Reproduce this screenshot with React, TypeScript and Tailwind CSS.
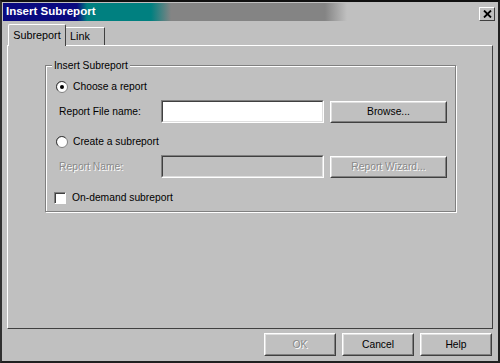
import React from 'react';

const font = "font-['Liberation_Sans',Arial,sans-serif]";

function Bevel({ children, className = "", disabled = false }: { children: React.ReactNode; className?: string; disabled?: boolean }) {
    return (
        <div className={`shrink-0 border border-t-white border-l-white border-r-[#404040] border-b-[#404040] ${className}`}>
            <div className="w-full h-full border border-t-[#dfdfdf] border-l-[#dfdfdf] border-r-[#808080] border-b-[#808080] flex items-center justify-center">
                <span className={disabled ? "text-[#8a8a8a] [text-shadow:1px_1px_0_#fff]" : "text-black"}>{children}</span>
            </div>
        </div>
    );
}

function Field({ disabled = false }: { disabled?: boolean }) {
    return (
        <div className="shrink-0 w-[163px] h-[23px] border border-t-[#808080] border-l-[#808080] border-r-white border-b-white">
            <div className={`w-full h-full border border-t-[#404040] border-l-[#404040] border-r-[#dfdfdf] border-b-[#dfdfdf] ${disabled ? "bg-[#c0c0c0]" : "bg-white"}`} />
        </div>
    );
}

function Radio({ checked }: { checked: boolean }) {
    return (
        <svg width="12" height="12" viewBox="0 0 12 12">
            <circle cx="6" cy="6" r="5.5" fill="#fff" stroke="#808080" />
            <path d="M2 9.5 A5 5 0 0 1 9.5 2" fill="none" stroke="#404040" />
            {checked && <circle cx="6" cy="6" r="2" fill="#000" />}
        </svg>
    );
}

export default function App() {
    return (
        <div className={`w-[500px] h-[363px] bg-[#c0c0c0] border-2 border-t-[#101010] border-l-[#303030] border-r-[#202020] border-b-[#202020] text-[10.3px] ${font} flex flex-col`}>
            <div className="h-[18px] mx-[1px] mt-[1px] flex items-center justify-between bg-[linear-gradient(to_right,#0a0a80_0,#0a0a80_74px,#008080_84px,#008080_148px,#848484_168px,#848484_322px,#c0c0c0_344px)]">
                <span className="text-white font-bold text-[11.5px] pl-[3px]">Insert Subreport</span>
                <div className="w-[16px] h-[14px] mr-[2px] mt-[3px] border border-t-white border-l-white border-r-[#404040] border-b-[#404040] bg-[#c0c0c0] flex items-center justify-center">
                    <svg width="9" height="8" viewBox="0 0 9 8"><path d="M1 0.5 L8 7.5 M8 0.5 L1 7.5" stroke="#000" strokeWidth="1.8" /></svg>
                </div>
            </div>

            <div className="px-[5px] pt-[2px] flex flex-col flex-1">
                <div className="flex items-end h-[22px] pl-[1px] relative z-10">
                    <div className="h-[22px] w-[58px] border border-b-0 border-t-white border-l-white border-r-[#404040] bg-[#c0c0c0] rounded-t-[2px] flex items-center justify-center -mb-[1px] pb-[1px] text-[10.8px]">Subreport</div>
                    <div className="h-[18px] w-[39px] border border-b-0 border-t-white border-l-0 border-r-[#404040] bg-[#c0c0c0] flex items-center pl-[4px] text-[10.8px]">Link</div>
                </div>
                <div className="h-[284px] border border-t-white border-l-white border-r-[#404040] border-b-[#404040] pt-[19px] pl-[37px]">
                    <div className="w-[411px] h-[147px] border border-[#808080] relative shadow-[inset_1px_1px_0_#fff,1px_1px_0_#fff] pl-[10px] pr-[2px] pt-[13px]">
                        <span className="absolute -top-[8px] left-[6px] bg-[#c0c0c0] px-[2px]">Insert Subreport</span>
                        <div className="flex items-center gap-[5px] h-[16px]">
                            <Radio checked />
                            <span>Choose a report</span>
                        </div>
                        <div className="flex items-center mt-[5px] h-[23px]">
                            <span className="w-[105px] shrink-0 pl-[3px]">Report File name:</span>
                            <Field />
                            <Bevel className="w-[117px] h-[22px] ml-[6px]">Browse...</Bevel>
                        </div>
                        <div className="flex items-center gap-[5px] h-[16px] mt-[11px]">
                            <Radio checked={false} />
                            <span>Create a subreport</span>
                        </div>
                        <div className="flex items-center mt-[5px] h-[23px]">
                            <span className="w-[105px] shrink-0 pl-[3px] text-[#8a8a8a] [text-shadow:1px_1px_0_#fff]">Report Name:</span>
                            <Field disabled />
                            <Bevel className="w-[117px] h-[22px] ml-[6px]" disabled>Report Wizard...</Bevel>
                        </div>
                        <div className="flex items-center gap-[6px] h-[16px] mt-[12px] -ml-[2px]">
                            <div className="w-[12px] h-[12px] border border-t-[#808080] border-l-[#808080] border-r-white border-b-white bg-white shadow-[inset_1px_1px_0_#404040]" />
                            <span>On-demand subreport</span>
                        </div>
                    </div>
                </div>
                <div className="flex justify-end gap-[6px] mt-[4px] pr-[1px]">
                    <Bevel className="w-[72px] h-[23px]" disabled>OK</Bevel>
                    <Bevel className="w-[72px] h-[23px]">Cancel</Bevel>
                    <Bevel className="w-[72px] h-[23px]">Help</Bevel>
                </div>
            </div>
        </div>
    );
}
